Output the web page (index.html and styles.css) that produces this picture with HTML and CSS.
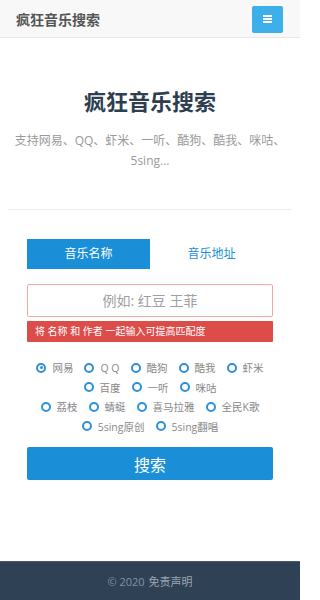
FILE: index.html
```html
<!DOCTYPE html>
<html lang="zh">
<head>
<meta charset="utf-8">
<title>疯狂音乐搜索</title>
<link rel="stylesheet" href="styles.css">
</head>
<body>
<div class="page">
  <header class="navbar">
    <span class="brand">疯狂音乐搜索</span>
    <button class="toggle" type="button" aria-label="菜单">
      <span class="bar"></span><span class="bar"></span><span class="bar"></span>
    </button>
  </header>

  <main class="main">
    <section class="hero">
      <h1 class="hero-title">疯狂音乐搜索</h1>
      <p class="hero-sub">支持网易、QQ、虾米、一听、酷狗、酷我、咪咕、5sing...</p>
    </section>
    <hr class="divider">

    <form class="search-form">
      <div class="tabs">
        <span class="tab tab-active">音乐名称</span>
        <span class="tab">音乐地址</span>
      </div>
      <input class="query" type="text" placeholder="例如: 红豆 王菲">
      <div class="alert">将 名称 和 作者 一起输入可提高匹配度</div>

      <div class="sources">
        <div class="row">
          <label class="radio"><span class="dot checked"></span>网易</label>
          <label class="radio"><span class="dot"></span>Q Q</label>
          <label class="radio"><span class="dot"></span>酷狗</label>
          <label class="radio"><span class="dot"></span>酷我</label>
          <label class="radio"><span class="dot"></span>虾米</label>
        </div>
        <div class="row">
          <label class="radio"><span class="dot"></span>百度</label>
          <label class="radio"><span class="dot"></span>一听</label>
          <label class="radio"><span class="dot"></span>咪咕</label>
        </div>
        <div class="row">
          <label class="radio"><span class="dot"></span>荔枝</label>
          <label class="radio"><span class="dot"></span>蜻蜓</label>
          <label class="radio"><span class="dot"></span>喜马拉雅</label>
          <label class="radio"><span class="dot"></span>全民K歌</label>
        </div>
        <div class="row">
          <label class="radio"><span class="dot"></span>5sing原创</label>
          <label class="radio"><span class="dot"></span>5sing翻唱</label>
        </div>
      </div>

      <button class="submit" type="button">搜索</button>
    </form>
  </main>

  <footer class="footer">© 2020 <span class="footer-link">免责声明</span></footer>
</div>
</body>
</html>
```

FILE: styles.css
```css
* { box-sizing: border-box; }
html, body { margin: 0; padding: 0; }
body {
  font-family: "Open Sans", "Noto Sans CJK SC", sans-serif;
  background: #fff;
  color: #333;
}
.page {
  width: 300px;
  min-height: 600px;
  display: flex;
  flex-direction: column;
}
.navbar {
  height: 38px;
  background: #f8f8f8;
  border-bottom: 1px solid #e7e7e7;
  display: flex;
  align-items: center;
  justify-content: space-between;
  padding: 0 17px 0 16px;
}
.brand {
  font-size: 14px;
  font-weight: bold;
  color: #555;
  margin-top: 1px;
}
.toggle {
  width: 31px;
  height: 27px;
  background: #3db0ea;
  border: 0;
  border-radius: 2px;
  padding: 0;
  display: flex;
  flex-direction: column;
  align-items: center;
  justify-content: center;
  gap: 1px;
  margin-top: 1px;
}
.bar {
  display: block;
  width: 9px;
  height: 2px;
  background: #fff;
}
.main { flex: 1; }
.hero {
  text-align: center;
  padding: 48px 12px 0;
}
.hero-title {
  margin: 0;
  font-size: 22px;
  line-height: 30px;
  font-weight: bold;
  color: #2c3e50;
}
.hero-sub {
  margin: 15px 0 0;
  font-size: 12px;
  line-height: 20px;
  color: #999;
}
.divider {
  border: 0;
  border-top: 1px solid #eeeeee;
  margin: 38px 8px 0;
}
.search-form {
  padding: 29px 27px 0;
}
.tabs {
  display: flex;
}
.tab {
  flex: 1;
  height: 30px;
  line-height: 30px;
  text-align: center;
  font-size: 12px;
  color: #1a8fd8;
}
.tab-active {
  background: #1a8fd8;
  color: #fff;
}
.query {
  display: block;
  width: 100%;
  height: 33px;
  margin-top: 15px;
  border: 1px solid #f2a6a6;
  border-radius: 2px;
  text-align: center;
  font-family: inherit;
  font-size: 14px;
  color: #555;
  outline: none;
}
.query::placeholder { color: #a0a0a0; }
.alert {
  margin-top: 4px;
  height: 21px;
  line-height: 21px;
  background: #dc4d4a;
  color: #fff;
  font-size: 10px;
  padding-left: 8px;
  border-radius: 1px;
}
.sources {
  margin-top: 16px;
}
.row {
  display: flex;
  justify-content: center;
  column-gap: 11px;
  height: 19.5px;
  align-items: center;
}
.radio {
  display: inline-flex;
  align-items: center;
  gap: 6px;
  font-size: 10.5px;
  color: #888;
  white-space: nowrap;
}
.dot {
  width: 10px;
  height: 10px;
  border: 2px solid #2f90d8;
  border-radius: 50%;
  display: inline-flex;
  align-items: center;
  justify-content: center;
}
.dot.checked::after {
  content: "";
  width: 3px;
  height: 3px;
  border-radius: 50%;
  background: #2f90d8;
}
.submit {
  display: block;
  width: 100%;
  height: 33px;
  margin-top: 11px;
  background: #1a8fd8;
  border: 0;
  border-radius: 2px;
  color: #fff;
  font-family: inherit;
  font-size: 16px;
}
.footer {
  height: 39px;
  background: #2e4155;
  border-top: 1px solid #4b5a6a;
  color: #8593a1;
  font-size: 11px;
  display: flex;
  align-items: center;
  justify-content: center;
  gap: 4px;
}
.footer-link { color: #9aa6b2; }
```
